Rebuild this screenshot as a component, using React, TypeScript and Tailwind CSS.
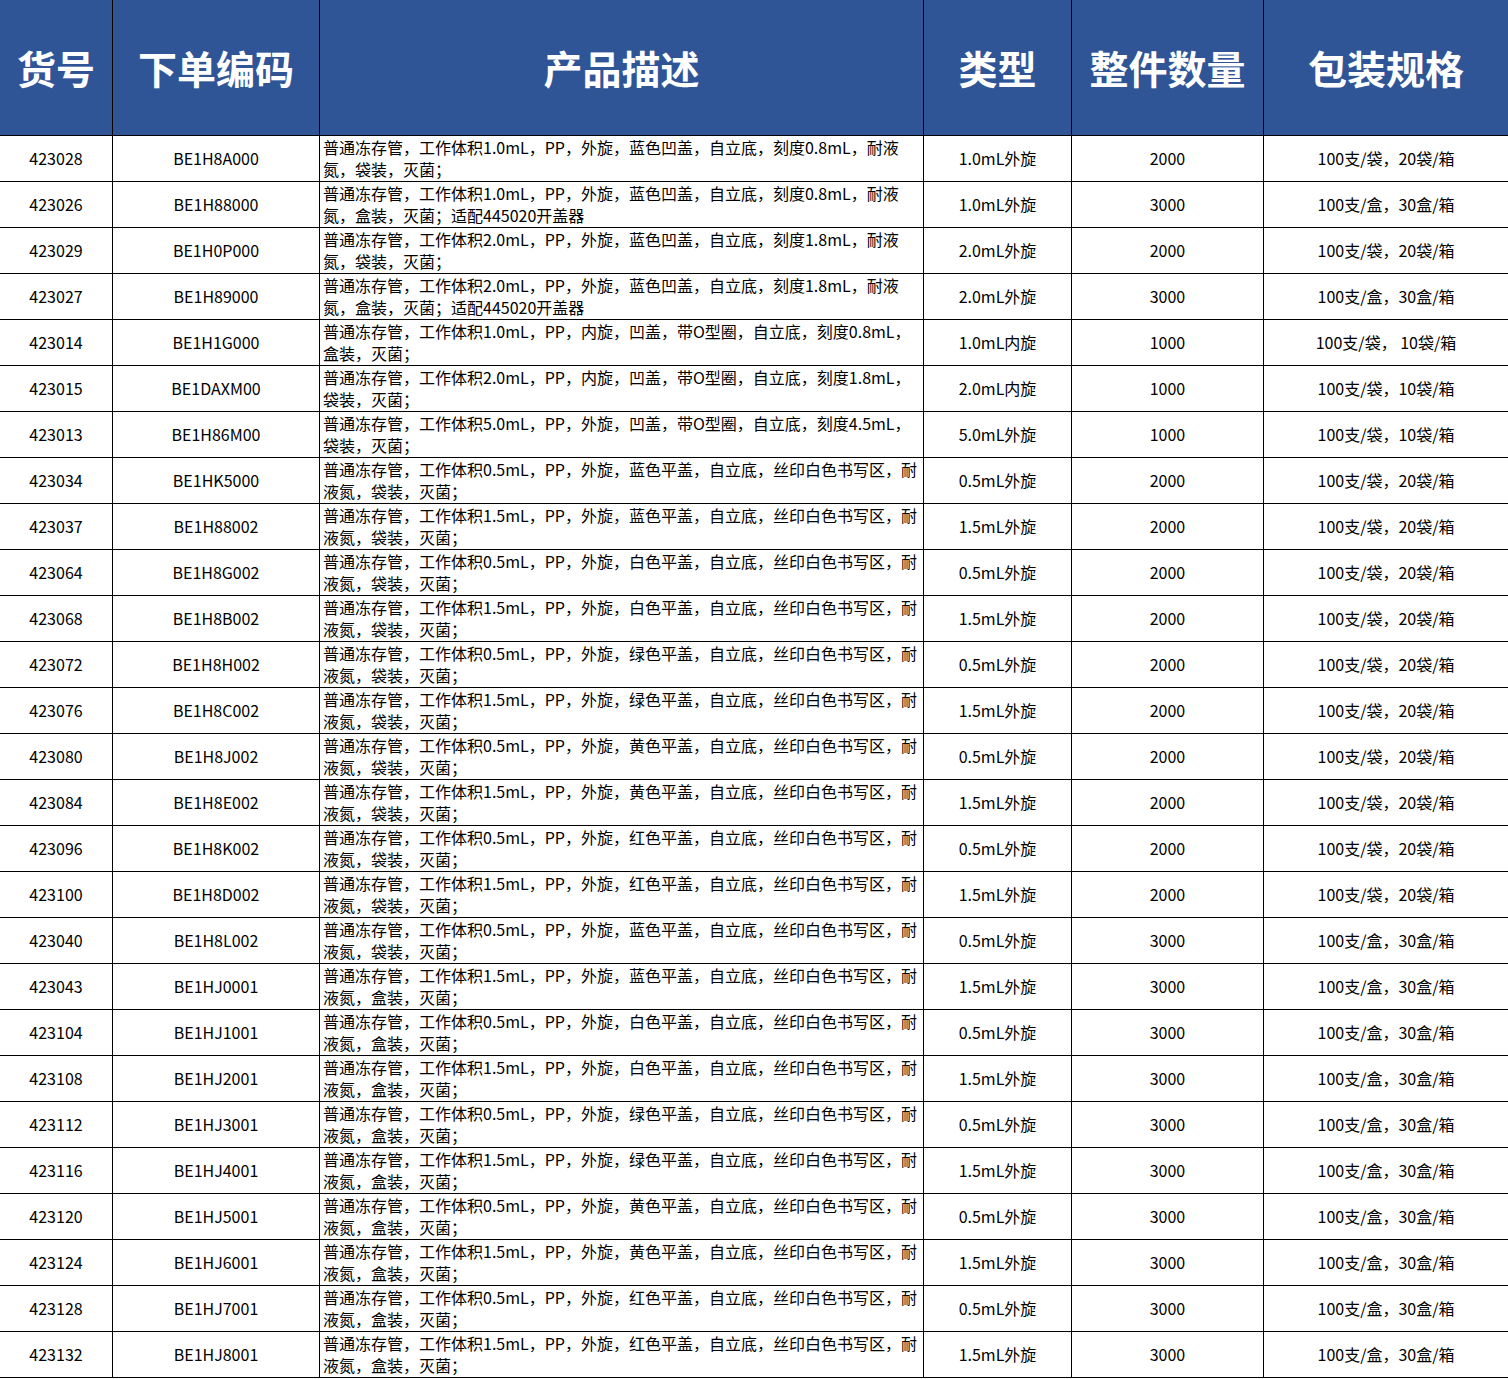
const rows: [string, string, string, string, string, string, string][] = [
  ["423028", "BE1H8A000", "普通冻存管，工作体积1.0mL，PP，外旋，蓝色凹盖，自立底，刻度0.8mL，耐液", "氮，袋装，灭菌；", "1.0mL外旋", "2000", "100支/袋，20袋/箱"],
  ["423026", "BE1H88000", "普通冻存管，工作体积1.0mL，PP，外旋，蓝色凹盖，自立底，刻度0.8mL，耐液", "氮，盒装，灭菌；适配445020开盖器", "1.0mL外旋", "3000", "100支/盒，30盒/箱"],
  ["423029", "BE1H0P000", "普通冻存管，工作体积2.0mL，PP，外旋，蓝色凹盖，自立底，刻度1.8mL，耐液", "氮，袋装，灭菌；", "2.0mL外旋", "2000", "100支/袋，20袋/箱"],
  ["423027", "BE1H89000", "普通冻存管，工作体积2.0mL，PP，外旋，蓝色凹盖，自立底，刻度1.8mL，耐液", "氮，盒装，灭菌；适配445020开盖器", "2.0mL外旋", "3000", "100支/盒，30盒/箱"],
  ["423014", "BE1H1G000", "普通冻存管，工作体积1.0mL，PP，内旋，凹盖，带O型圈，自立底，刻度0.8mL，", "盒装，灭菌；", "1.0mL内旋", "1000", "100支/袋， 10袋/箱"],
  ["423015", "BE1DAXM00", "普通冻存管，工作体积2.0mL，PP，内旋，凹盖，带O型圈，自立底，刻度1.8mL，", "袋装，灭菌；", "2.0mL内旋", "1000", "100支/袋，10袋/箱"],
  ["423013", "BE1H86M00", "普通冻存管，工作体积5.0mL，PP，外旋，凹盖，带O型圈，自立底，刻度4.5mL，", "袋装，灭菌；", "5.0mL外旋", "1000", "100支/袋，10袋/箱"],
];
const more: [string, string, string, string, string, string][] = [
  ["423034", "BE1HK5000", "0.5", "蓝", "袋", "2000"],
  ["423037", "BE1H88002", "1.5", "蓝", "袋", "2000"],
  ["423064", "BE1H8G002", "0.5", "白", "袋", "2000"],
  ["423068", "BE1H8B002", "1.5", "白", "袋", "2000"],
  ["423072", "BE1H8H002", "0.5", "绿", "袋", "2000"],
  ["423076", "BE1H8C002", "1.5", "绿", "袋", "2000"],
  ["423080", "BE1H8J002", "0.5", "黄", "袋", "2000"],
  ["423084", "BE1H8E002", "1.5", "黄", "袋", "2000"],
  ["423096", "BE1H8K002", "0.5", "红", "袋", "2000"],
  ["423100", "BE1H8D002", "1.5", "红", "袋", "2000"],
  ["423040", "BE1H8L002", "0.5", "蓝", "袋", "3000"],
  ["423043", "BE1HJ0001", "1.5", "蓝", "盒", "3000"],
  ["423104", "BE1HJ1001", "0.5", "白", "盒", "3000"],
  ["423108", "BE1HJ2001", "1.5", "白", "盒", "3000"],
  ["423112", "BE1HJ3001", "0.5", "绿", "盒", "3000"],
  ["423116", "BE1HJ4001", "1.5", "绿", "盒", "3000"],
  ["423120", "BE1HJ5001", "0.5", "黄", "盒", "3000"],
  ["423124", "BE1HJ6001", "1.5", "黄", "盒", "3000"],
  ["423128", "BE1HJ7001", "0.5", "红", "盒", "3000"],
  ["423132", "BE1HJ8001", "1.5", "红", "盒", "3000"],
];

const all = [
  ...rows,
  ...more.map(
    ([id, code, v, c, p, n]) =>
      [
        id,
        code,
        `普通冻存管，工作体积${v}mL，PP，外旋，${c}色平盖，自立底，丝印白色书写区，耐`,
        `液氮，${p}装，灭菌；`,
        `${v}mL外旋`,
        n,
        n === "2000" ? "100支/袋，20袋/箱" : "100支/盒，30盒/箱",
      ] as [string, string, string, string, string, string, string]
  ),
];

const headers = ["货号", "下单编码", "产品描述", "类型", "整件数量", "包装规格"];
const cols = "grid-cols-[113px_207px_604px_148px_192px_244px]";

export default function App() {
  return (
    <div
      className="w-[1508px] bg-white text-black"
      style={{ fontFamily: '"Noto Sans CJK SC", "Noto Sans", sans-serif' }}
    >
      <div className={`grid ${cols} h-[136px] bg-[#2f5597] border-b border-black`}>
        {headers.map((h, i) => (
          <div
            key={h}
            className={`flex items-center justify-center text-white font-bold text-[39px] ${i < 5 ? "border-r border-black" : ""}`}
          >
            {h}
          </div>
        ))}
      </div>
      {all.map((r) => (
        <div key={r[0]} className={`grid ${cols} h-[46px] border-b border-black text-[16px]`}>
          <div className="flex items-center justify-center pb-[2px] border-r border-black">{r[0]}</div>
          <div className="flex items-center justify-center pb-[2px] border-r border-black">{r[1]}</div>
          <div className="flex flex-col justify-center pl-[3px] pb-[2px] leading-[22px] border-r border-black whitespace-nowrap overflow-hidden">
            <span>{r[2]}</span>
            <span>{r[3]}</span>
          </div>
          <div className="flex items-center justify-center pb-[2px] border-r border-black">{r[4]}</div>
          <div className="flex items-center justify-center pb-[2px] border-r border-black">{r[5]}</div>
          <div className="flex items-center justify-center pb-[2px]">{r[6]}</div>
        </div>
      ))}
    </div>
  );
}
